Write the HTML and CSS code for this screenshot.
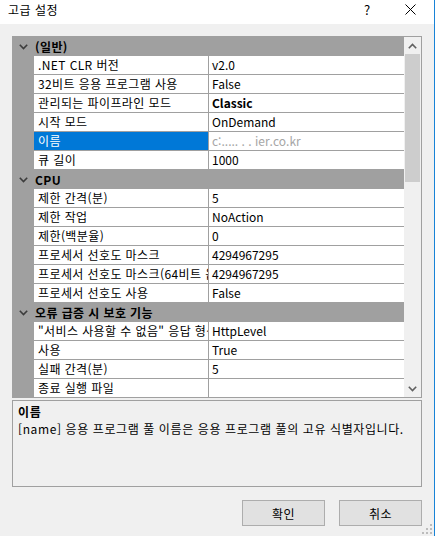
FILE: index.html
```html
<!DOCTYPE html>
<html lang="ko">
<head>
<meta charset="utf-8">
<title>고급 설정</title>
<link rel="stylesheet" href="styles.css">
</head>
<body>
<div class="window">
  <div class="titlebar">
    <span class="title">고급 설정</span>
    <span class="tb-help">?</span>
    <span class="tb-close"><svg width="11" height="11" viewBox="0 0 11 11"><path d="M0.5 0.5 L10.5 10.5 M10.5 0.5 L0.5 10.5" stroke="#000" stroke-width="1" fill="none"/></svg></span>
  </div>
  <div class="client">
    <div class="grid">
      <div class="rows">
        <div class="cat"><span class="m"><svg width="9" height="6" viewBox="0 0 9 6"><path d="M0.8 0.8 L4.5 4.5 L8.2 0.8" stroke="#3c3c3c" stroke-width="1.6" fill="none"/></svg></span><span class="ct">(일반)</span></div>
        <div class="row"><span class="m"></span><span class="n">.NET CLR 버전</span><span class="v">v2.0</span></div>
        <div class="row"><span class="m"></span><span class="n">32비트 응용 프로그램 사용</span><span class="v">False</span></div>
        <div class="row"><span class="m"></span><span class="n">관리되는 파이프라인 모드</span><span class="v b">Classic</span></div>
        <div class="row"><span class="m"></span><span class="n">시작 모드</span><span class="v">OnDemand</span></div>
        <div class="row"><span class="m"></span><span class="n sel">이름</span><span class="v ro">c:.....  .  .   ier.co.kr</span></div>
        <div class="row"><span class="m"></span><span class="n">큐 길이</span><span class="v">1000</span></div>
        <div class="cat"><span class="m"><svg width="9" height="6" viewBox="0 0 9 6"><path d="M0.8 0.8 L4.5 4.5 L8.2 0.8" stroke="#3c3c3c" stroke-width="1.6" fill="none"/></svg></span><span class="ct">CPU</span></div>
        <div class="row"><span class="m"></span><span class="n">제한 간격(분)</span><span class="v">5</span></div>
        <div class="row"><span class="m"></span><span class="n">제한 작업</span><span class="v">NoAction</span></div>
        <div class="row"><span class="m"></span><span class="n">제한(백분율)</span><span class="v">0</span></div>
        <div class="row"><span class="m"></span><span class="n">프로세서 선호도 마스크</span><span class="v">4294967295</span></div>
        <div class="row"><span class="m"></span><span class="n">프로세서 선호도 마스크(64비트 옵션)</span><span class="v">4294967295</span></div>
        <div class="row"><span class="m"></span><span class="n">프로세서 선호도 사용</span><span class="v">False</span></div>
        <div class="cat"><span class="m"><svg width="9" height="6" viewBox="0 0 9 6"><path d="M0.8 0.8 L4.5 4.5 L8.2 0.8" stroke="#3c3c3c" stroke-width="1.6" fill="none"/></svg></span><span class="ct">오류 급증 시 보호 기능</span></div>
        <div class="row"><span class="m"></span><span class="n">"서비스 사용할 수 없음" 응답 형식</span><span class="v">HttpLevel</span></div>
        <div class="row"><span class="m"></span><span class="n">사용</span><span class="v">True</span></div>
        <div class="row"><span class="m"></span><span class="n">실패 간격(분)</span><span class="v">5</span></div>
        <div class="row"><span class="m"></span><span class="n">종료 실행 파일</span><span class="v"></span></div>
      </div>
      <div class="scrollbar">
        <div class="sb-arrow"><svg width="9" height="6" viewBox="0 0 9 6"><path d="M0.8 5.2 L4.5 1.5 L8.2 5.2" stroke="#606060" stroke-width="1.6" fill="none"/></svg></div>
        <div class="sb-thumb"></div>
        <div class="sb-track"></div>
        <div class="sb-arrow"><svg width="9" height="6" viewBox="0 0 9 6"><path d="M0.8 0.8 L4.5 4.5 L8.2 0.8" stroke="#606060" stroke-width="1.6" fill="none"/></svg></div>
      </div>
    </div>
    <div class="desc">
      <div class="desc-title">이름</div>
      <div class="desc-text">[name] 응용 프로그램 풀 이름은 응용 프로그램 풀의 고유 식별자입니다.</div>
    </div>
    <div class="buttons">
      <button class="btn">확인</button>
      <button class="btn">취소</button>
    </div>
    <div class="grip">
      <svg width="12" height="12" viewBox="0 0 12 12">
        <rect x="9" y="1" width="2" height="2" fill="#bcbcbc"/>
        <rect x="5" y="5" width="2" height="2" fill="#bcbcbc"/>
        <rect x="9" y="5" width="2" height="2" fill="#bcbcbc"/>
        <rect x="1" y="9" width="2" height="2" fill="#bcbcbc"/>
        <rect x="5" y="9" width="2" height="2" fill="#bcbcbc"/>
        <rect x="9" y="9" width="2" height="2" fill="#bcbcbc"/>
      </svg>
    </div>
  </div>
</div>
</body>
</html>
```
FILE: styles.css
```css
html, body {
  margin: 0;
  padding: 0;
}
body {
  width: 435px;
  height: 536px;
  overflow: hidden;
  font-family: "Noto Sans CJK KR", "Noto Sans", sans-serif;
  font-size: 12px;
  color: #000;
  background: #f0f0f0;
}
.window {
  width: 434px;
  height: 536px;
  border-right: 1px solid #1883d7;
  display: flex;
  flex-direction: column;
  background: #f0f0f0;
}
.titlebar {
  height: 24px;
  background: #fff;
  display: flex;
  align-items: center;
  flex-shrink: 0;
}
.title {
  margin-left: 8px;
  flex: 1;
  line-height: 16px;
  margin-top: -4px;
  letter-spacing: 0.5px;
}
.tb-help {
  width: 14px;
  text-align: center;
  margin-right: 31px;
  line-height: 16px;
  margin-top: -4px;
  font-size: 13px;
}
.tb-close {
  margin-right: 18px;
  display: flex;
  margin-top: -6px;
}
.client {
  flex: 1;
  padding: 12px 12px 0 12px;
  display: flex;
  flex-direction: column;
  position: relative;
}
.grid {
  height: 360px;
  border: 1px solid #a0a0a0;
  display: flex;
  background: #fff;
}
.rows {
  flex: 1;
  overflow: hidden;
  display: flex;
  flex-direction: column;
}
.row, .cat {
  display: flex;
  height: 19px;
  flex-shrink: 0;
}
.m {
  width: 21px;
  flex-shrink: 0;
  background: #a0a0a0;
  display: flex;
  align-items: center;
  justify-content: center;
}
.cat {
  background: #a0a0a0;
}
.ct {
  font-weight: bold;
  line-height: 19px;
  padding-left: 1px;
  letter-spacing: 0.4px;
}
.n, .v {
  height: 18px;
  line-height: 18px;
  border-bottom: 1px solid #a0a0a0;
  white-space: nowrap;
  overflow: hidden;
}
.n {
  width: 170px;
  padding-left: 4px;
  border-right: 1px solid #a0a0a0;
  flex-shrink: 0;
  letter-spacing: 0.4px;
}
.n.sel {
  background: #0078d7;
  color: #fff;
}
.v {
  flex: 1;
  padding-left: 3px;
}
.v.b {
  font-weight: bold;
}
.v.ro {
  color: #a6a6a6;
}
.scrollbar {
  width: 17px;
  flex-shrink: 0;
  background: #f0f0f0;
  display: flex;
  flex-direction: column;
}
.sb-arrow {
  height: 17px;
  display: flex;
  align-items: center;
  justify-content: center;
  flex-shrink: 0;
}
.sb-thumb {
  height: 128px;
  margin: 0 1px;
  background: #cdcdcd;
  flex-shrink: 0;
}
.sb-track {
  flex: 1;
}
.desc {
  margin-top: 2px;
  height: 83px;
  border: 1px solid #a0a0a0;
  padding: 2px 5px 0 5px;
  line-height: 17px;
  letter-spacing: 0.6px;
}
.desc-title {
  font-weight: bold;
}
.buttons {
  display: flex;
  justify-content: flex-end;
  gap: 14px;
  margin-top: 13px;
}
.btn {
  width: 83px;
  height: 26px;
  background: #e1e1e1;
  border: 1px solid #adadad;
  font-family: "Noto Sans CJK KR", "Noto Sans", sans-serif;
  font-size: 12px;
  letter-spacing: 0.5px;
  color: #000;
  padding: 0;
  margin: 0;
}
.grip {
  position: absolute;
  right: 1px;
  bottom: 1px;
  display: flex;
}
```
